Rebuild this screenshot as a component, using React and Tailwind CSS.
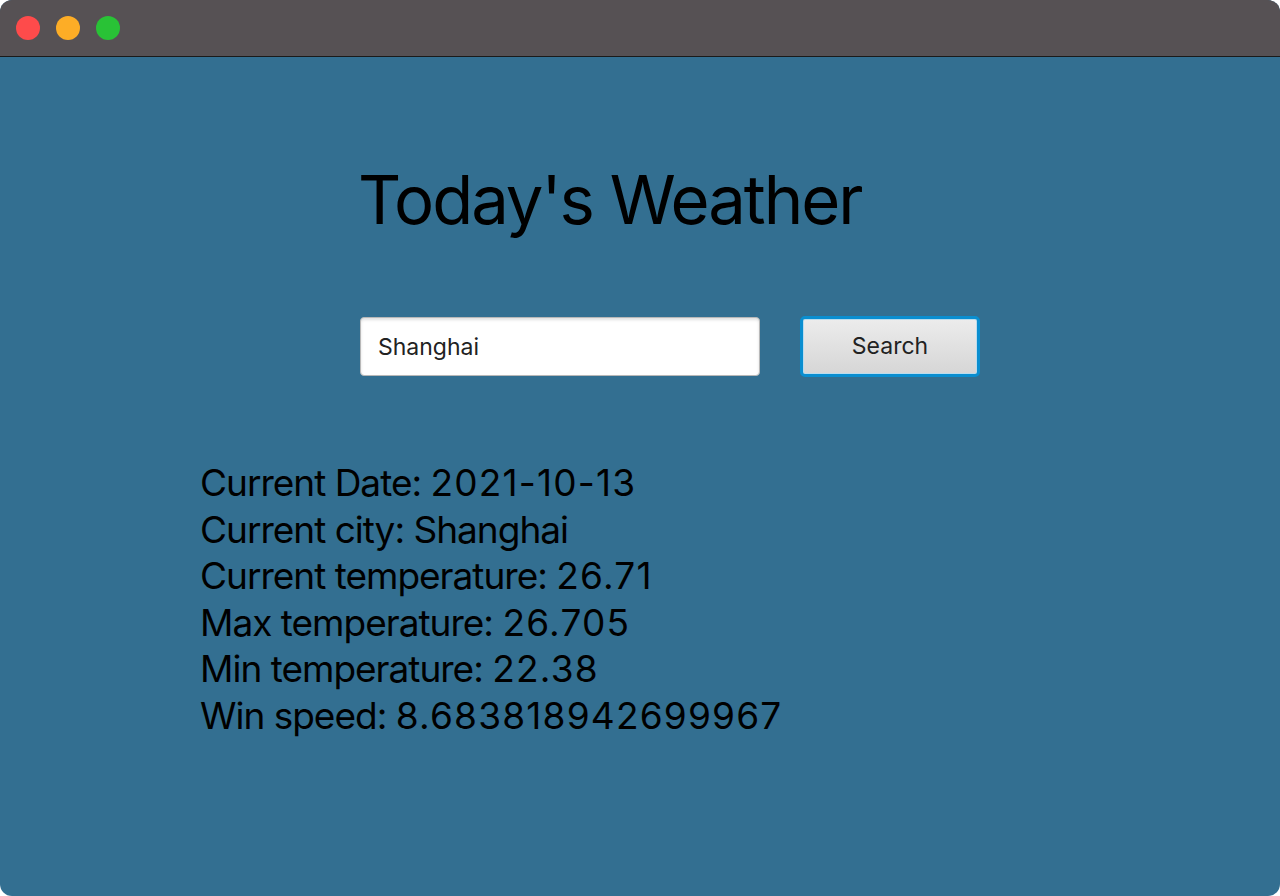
import React, { useState } from 'react'

const rows = [
    ['Current Date: ', '2021-10-13'],
    ['Current city: ', 'Shanghai'],
    ['Current temperature: ', '26.71'],
    ['Max temperature: ', '26.705'],
    ['Min temperature: ', '22.38'],
    ['Win speed: ', '8.683818942699967'],
]

export default function App() {
    const [city, setCity] = useState('Shanghai')

    return (
        <div className="w-[1280px] h-[896px] bg-white font-['Inter',sans-serif]">
            <div className="w-full h-full rounded-[12px] overflow-hidden flex flex-col bg-[#336f91]">
                {/* title bar */}
                <div className="h-[57px] shrink-0 bg-[#565154] border-b border-[#1a1a1a] flex items-center gap-[16px] pl-[16px]">
                    <span className="w-[24px] h-[24px] rounded-full bg-[#fe4b4b]" />
                    <span className="w-[24px] h-[24px] rounded-full bg-[#fdad26]" />
                    <span className="w-[24px] h-[24px] rounded-full bg-[#29c236]" />
                </div>

                <div className="flex-1 flex flex-col">
                    <div className="pl-[358px] pt-[98px]">
                        <h1 className="text-[67px] leading-[90px] text-black font-normal tracking-[-2px]">Today's Weather</h1>
                    </div>

                    <div className="pl-[360px] pt-[71px] flex items-center gap-[40px]">
                        <input
                            value={city}
                            onChange={e => setCity(e.target.value)}
                            className="w-[400px] h-[59px] bg-white border border-[#b8b8b8] rounded-[4px] px-[17px] text-[23px] text-[#222] outline-none shadow-[inset_0_2px_3px_rgba(0,0,0,0.12)]"
                        />
                        <button className="w-[180px] h-[61px] rounded-[5px] border-[3px] border-[#0a8ed0] bg-gradient-to-b from-[#ececec] to-[#d6d6d6] text-[23px] text-[#222] shadow-[inset_0_0_0_1px_#b9dcee]">
                            Search
                        </button>
                    </div>

                    <div className="pl-[200px] pt-[83px] flex flex-col">
                        {rows.map(([label, value]) => (
                            <p key={label} className="text-[37px] leading-[46.6px] text-black whitespace-pre">
                                <span className="tracking-[-1px]">{label}</span>
                                <span className={/\d/.test(value) ? 'tracking-[1.2px]' : 'tracking-[-1px]'}>{value}</span>
                            </p>
                        ))}
                    </div>
                </div>
            </div>
        </div>
    )
}
